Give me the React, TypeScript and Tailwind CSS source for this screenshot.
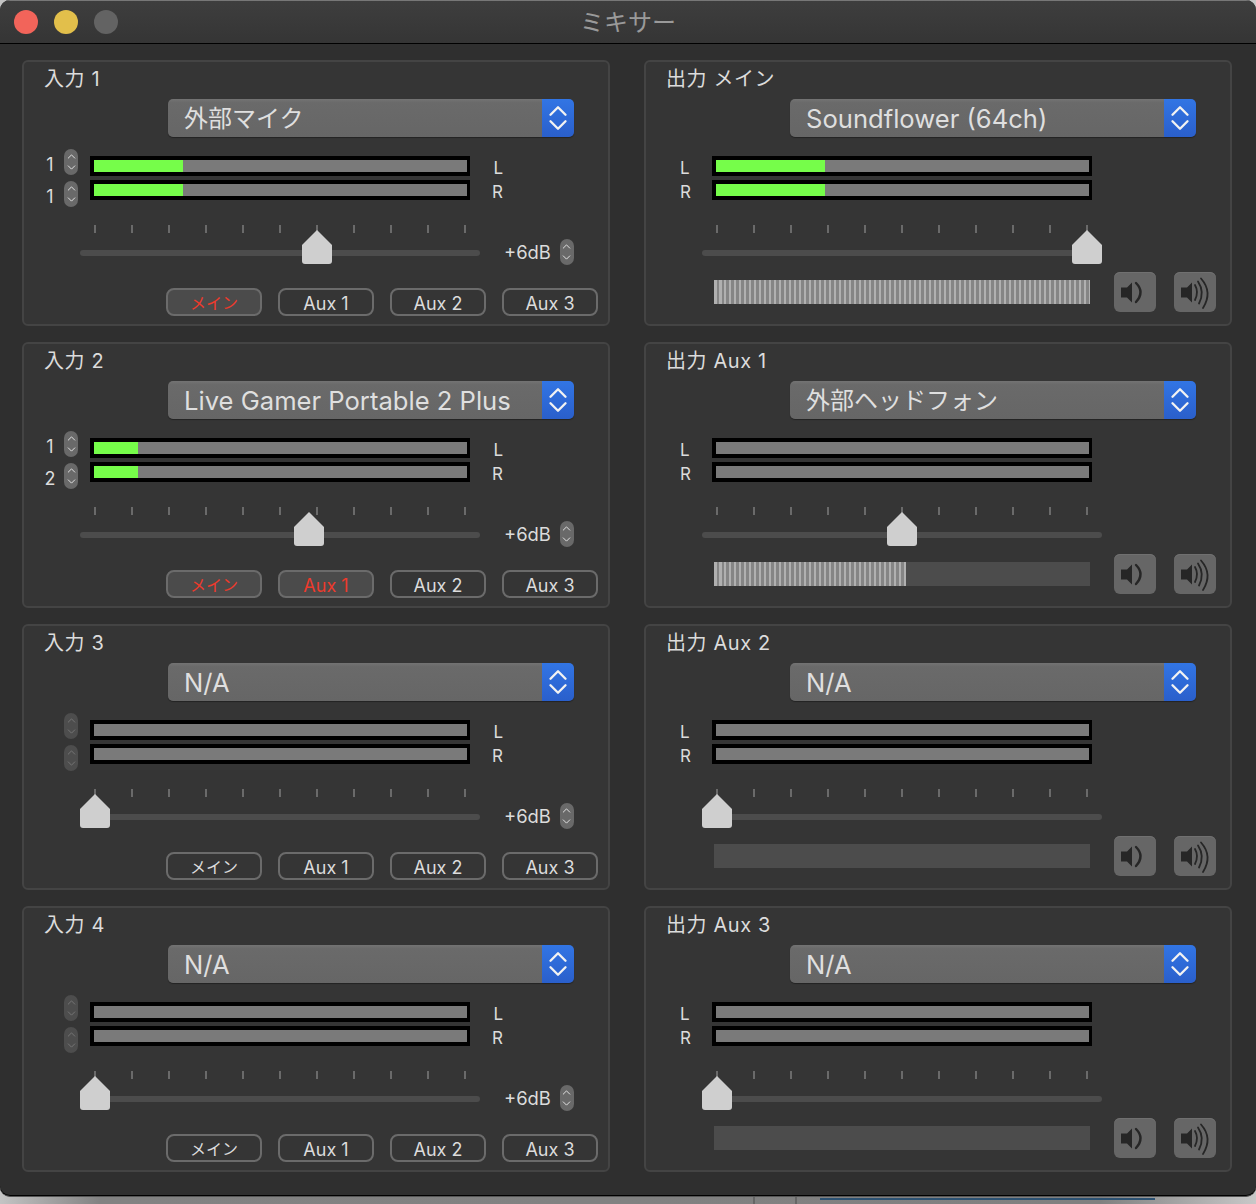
import { Fragment } from 'react'
import type { ReactNode } from 'react'
import { ChevronDown, ChevronUp } from 'lucide-react'
import clsx from 'clsx'

const font = "font-['Inter','Noto_Sans_CJK_JP',sans-serif]"

const inputs = [
    { name: '入力 1', device: '外部マイク', ch: ['1', '1'], level: 89, vol: 237, on: [true, false, false, false], live: true },
    { name: '入力 2', device: 'Live Gamer Portable 2 Plus', ch: ['1', '2'], level: 44, vol: 229, on: [true, true, false, false], live: true },
    { name: '入力 3', device: 'N/A', ch: ['', ''], level: 0, vol: 15, on: [false, false, false, false], live: false },
    { name: '入力 4', device: 'N/A', ch: ['', ''], level: 0, vol: 15, on: [false, false, false, false], live: false },
]

const outputs = [
    { name: '出力 メイン', device: 'Soundflower (64ch)', level: 109, vol: 385, bar: 376 },
    { name: '出力 Aux 1', device: '外部ヘッドフォン', level: 0, vol: 200, bar: 192 },
    { name: '出力 Aux 2', device: 'N/A', level: 0, vol: 15, bar: 0 },
    { name: '出力 Aux 3', device: 'N/A', level: 0, vol: 15, bar: 0 },
]

const Stepper = ({ dim }: { dim?: boolean }) => (
    <div className={clsx('w-[14px] h-[26px] rounded-[7px] flex flex-col items-center justify-center', dim ? 'bg-[#4d4d4d] text-[#757575]' : 'bg-[#696969] text-[#e2e2e2]')}>
        <ChevronUp size={13} strokeWidth={1.8} className="-mb-px" />
        <ChevronDown size={13} strokeWidth={1.8} className="-mt-px" />
    </div>
)

const Select = ({ value }: { value: string }) => (
    <div className="w-[406px] h-[38px] flex rounded-[5px] overflow-hidden shadow-[0_1px_1px_rgba(0,0,0,0.35)]">
        <div className={clsx('flex-1 bg-[linear-gradient(#737373,#6a6a6a_10%,#666666)] pl-4 pt-[2px] flex items-center text-[#dfdfdf] whitespace-nowrap', /^[\x00-\x7f]+$/.test(value) ? 'text-[25.6px]' : 'text-[24px]')}>
            {value}
        </div>
        <div className="w-8 bg-[linear-gradient(#3275e4,#2a5fcb)] flex flex-col items-center justify-center text-[#f2f2f2]">
            <ChevronUp size={30} strokeWidth={1.9} className="-mb-2 shrink-0" />
            <ChevronDown size={30} strokeWidth={1.9} className="-mt-2 shrink-0" />
        </div>
    </div>
)

const Meter = ({ level }: { level: number }) => (
    <div className="w-[380px] h-5 bg-[#7a7a7a] border-y-4 border-l-4 border-r-[3px] border-black">
        <div className="h-full bg-[#76fd4a]" style={{ width: level }} />
    </div>
)

const Slider = ({ pos }: { pos: number }) => (
    <div className="relative w-[400px] h-[44px]">
        <div className="flex justify-between px-[14px]">
            {Array.from({ length: 11 }).map((_, i) => (
                <div key={i} className="w-[2px] h-2 bg-[#6a6a6a]" />
            ))}
        </div>
        <div className="absolute left-0 right-0 top-[25px] h-[6px] rounded-full bg-[#4c4c4c]" />
        <svg className="absolute top-[5px]" style={{ left: pos - 15 }} width="30" height="34" viewBox="0 0 30 34">
            <path d="M15 0 L30 15 V31 Q30 34 27 34 H3 Q0 34 0 31 V15 Z" fill="#cfcfcf" />
        </svg>
    </div>
)

const Speaker = ({ loud }: { loud?: boolean }) => (
    <div className="w-[42px] h-10 rounded-[6px] bg-[#666666] shadow-[inset_0_1px_0_#707070]">
        <svg width="42" height="40" viewBox="0 0 42 40" fill="none" stroke="#262626" strokeWidth="1.8" strokeLinecap="round">
            <path d="M7 15.5 H13 L18 10.5 V30.5 L13 25.5 H7 Z" fill="#262626" stroke="none" />
            {loud ? (
                <Fragment>
                    <path d="M21 13 Q25 20 21 28" />
                    <path d="M24 9.5 Q31 20 25 31.5" />
                    <path d="M27 6.5 Q39 20 29 36" />
                </Fragment>
            ) : (
                <path d="M22 11 Q31 20 22 30" strokeWidth="2.4" />
            )}
        </svg>
    </div>
)

const RouteButton = ({ label, on }: { label: string; on: boolean }) => (
    <div className={clsx('w-24 h-7 pt-[2px] rounded-[8px] border-2 border-[#6b6b6b] flex items-center justify-center', label === 'メイン' ? 'text-[16px]' : 'text-[18px]', on ? 'bg-[#4b4b4b] text-[#ee3a2c]' : 'text-[#dcdcdc]')}>
        {label}
    </div>
)

const Panel = ({ name, children }: { name: string; children: ReactNode }) => (
    <section className="h-[266px] w-[588px] rounded-[6px] border-2 border-[#444444] bg-[#353535]">
        <div className="h-[37px] pl-5 pt-1 text-[20px] leading-[26px] tracking-[0.6px] text-[#dcdcdc]">{name}</div>
        {children}
    </section>
)

const InputPanel = ({ item }: { item: (typeof inputs)[number] }) => (
    <Panel name={item.name}>
        <div className="pl-[144px]"><Select value={item.device} /></div>
        <div className="flex pl-4 pt-3">
            <div className="w-[50px] flex flex-col gap-[6px]">
                {item.ch.map((c, i) => (
                    <div key={i} className="flex items-center h-[26px]">
                        <span className="w-5 mr-1 pt-1 text-center text-[18px] text-[#dcdcdc]">{c}</span>
                        <Stepper dim={!item.live} />
                    </div>
                ))}
            </div>
            <div className="pt-[7px] flex flex-col gap-1">
                <Meter level={item.level} />
                <Meter level={item.level} />
            </div>
            <div className="pt-[7px] flex flex-col items-end w-[33px] text-[17px] leading-6 text-[#dcdcdc]">
                <span>L</span>
                <span>R</span>
            </div>
        </div>
        <div className="flex pl-14 pt-[18px] items-start">
            <Slider pos={item.vol} />
            <div className="flex items-center gap-[9px] pl-6 pt-3 text-[18.4px] text-[#dcdcdc]">
                <span className="pt-[2px]">+6dB</span>
                <Stepper />
            </div>
        </div>
        <div className="flex gap-4 pl-[142px] pt-[19px]">
            {['メイン', 'Aux 1', 'Aux 2', 'Aux 3'].map((b, i) => (
                <RouteButton key={b} label={b} on={item.on[i]} />
            ))}
        </div>
    </Panel>
)

const OutputPanel = ({ item }: { item: (typeof outputs)[number] }) => (
    <Panel name={item.name}>
        <div className="pl-[144px]"><Select value={item.device} /></div>
        <div className="flex pl-[34px] pt-[19px]">
            <div className="w-[32px] flex flex-col text-[17px] leading-6 text-[#dcdcdc]">
                <span>L</span>
                <span>R</span>
            </div>
            <div className="flex flex-col gap-1">
                <Meter level={item.level} />
                <Meter level={item.level} />
            </div>
        </div>
        <div className="pl-14 pt-[21px]"><Slider pos={item.vol} /></div>
        <div className="flex pl-[68px] items-center mt-[3px]">
            <div className="w-[376px] h-6 bg-[#4c4c4c]">
                <div className="h-full bg-[repeating-linear-gradient(90deg,#b0b0b0_0,#b0b0b0_2.5px,#858585_2.5px,#858585_5px)]" style={{ width: item.bar }} />
            </div>
            <div className="flex gap-[18px] ml-6">
                <Speaker />
                <Speaker loud />
            </div>
        </div>
    </Panel>
)

export default function App() {
    return (
        <div className={clsx('w-[1256px] h-[1204px] overflow-hidden bg-[linear-gradient(90deg,#c4c4c4,#828282_100px,#808080_1100px,#c8c8c8)]', font)}>
            {/* Window */}
            <div className="w-[1256px] h-[1197px] bg-[#2f2f2f] rounded-[10px] border-b border-[#555555] shadow-[inset_0_-1px_0_#000] overflow-hidden">
                <header className="relative h-11 bg-[linear-gradient(#3e3e3e,#353535)] shadow-[inset_0_1px_0_#777777] border-b border-black flex items-center justify-center">
                    <div className="absolute left-[14px] top-[10px] flex gap-4">
                        <div className="w-6 h-6 rounded-full bg-[#f2645a]" />
                        <div className="w-6 h-6 rounded-full bg-[#e2bf4b]" />
                        <div className="w-6 h-6 rounded-full bg-[#636363]" />
                    </div>
                    <span className="text-[24px] pt-[2px] text-[#9a9a9a]">ミキサー</span>
                </header>
                <main className="grid grid-cols-[588px_588px] justify-between gap-y-4 pl-[22px] pr-6 pt-4">
                    {inputs.map((input, i) => (
                        <Fragment key={input.name}>
                            <InputPanel item={input} />
                            <OutputPanel item={outputs[i]} />
                        </Fragment>
                    ))}
                </main>
            </div>
            {/* Desktop behind the window */}
            <div className="flex h-[7px] pl-[753px]">
                <div className="w-[2px] bg-[#666666]" />
                <div className="w-[2px] ml-10 bg-[#666666]" />
                <div className="w-[335px] h-[2px] ml-[23px] mt-px bg-[#2d5273]" />
            </div>
        </div>
    )
}
